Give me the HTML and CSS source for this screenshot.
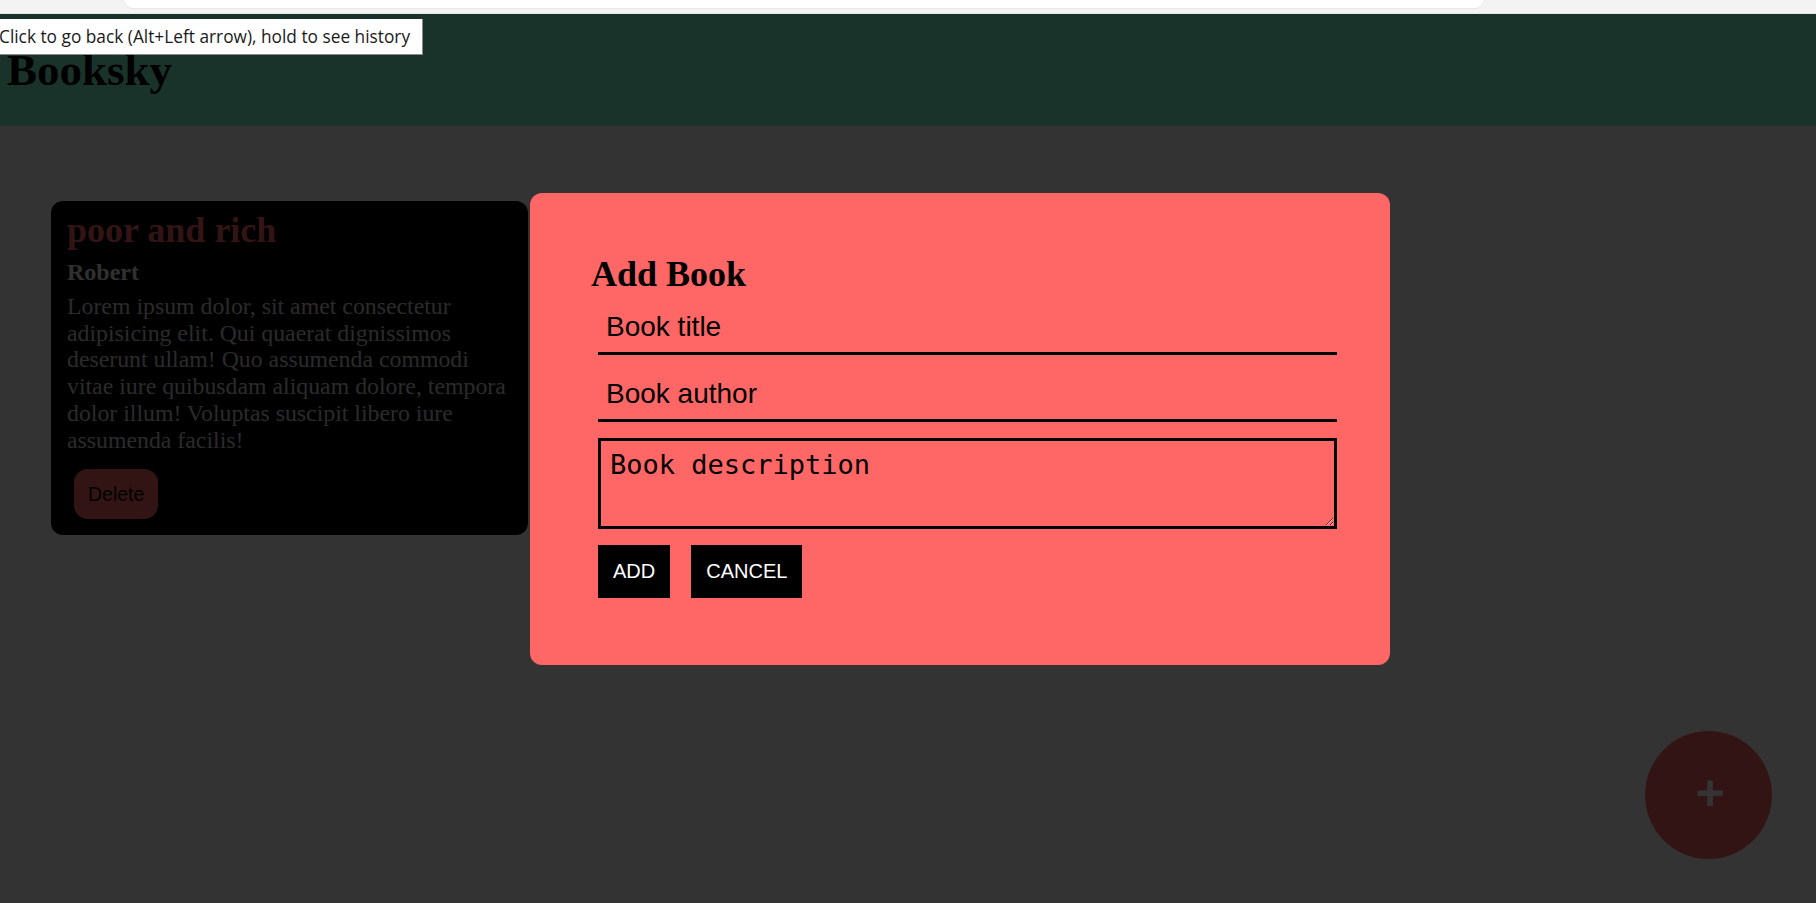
FILE: index.html
```html
<!DOCTYPE html>
<html lang="en">
<head>
<meta charset="utf-8">
<title>Booksky</title>
<link rel="stylesheet" href="styles.css">
</head>
<body>
<div class="browser-strip"><div class="omnibox"></div></div>

<header class="topbar">
  <h1 class="brand">Booksky</h1>
</header>

<main class="books">
  <article class="card">
    <h2 class="card-title">poor and rich</h2>
    <h3 class="card-author">Robert</h3>
    <p class="card-text">Lorem ipsum dolor, sit amet consectetur adipisicing elit. Qui quaerat dignissimos deserunt ullam! Quo assumenda commodi vitae iure quibusdam aliquam dolore, tempora dolor illum! Voluptas suscipit libero iure assumenda facilis!</p>
    <button class="delete-btn">Delete</button>
  </article>
</main>

<button class="fab" aria-label="Add book">+</button>

<div class="overlay"></div>

<section class="modal">
  <h2 class="modal-title">Add Book</h2>
  <form class="modal-form">
    <input class="field" type="text" placeholder="Book title">
    <input class="field" type="text" placeholder="Book author">
    <textarea class="field-area" placeholder="Book description"></textarea>
    <div class="actions">
      <button type="button" class="action-btn">ADD</button>
      <button type="button" class="action-btn">CANCEL</button>
    </div>
  </form>
</section>

<div class="tooltip">Click to go back (Alt+Left arrow), hold to see history</div>
</body>
</html>
```

FILE: styles.css
```css
* { box-sizing: border-box; }

html, body {
  margin: 0;
  padding: 0;
  background: #ffffff;
  font-family: "Liberation Serif", "Times New Roman", serif;
  height: 100%;
  overflow: hidden;
}

.browser-strip {
  height: 14px;
  background: #f3f3f3;
  border-bottom: 1px solid #e6e6e6;
  position: relative;
}

.omnibox {
  margin-left: 125px;
  width: 1358px;
  height: 8px;
  background: #ffffff;
  border-radius: 0 0 14px 14px;
  box-shadow: 0 1px 1px rgba(0,0,0,0.06);
}

.topbar {
  height: 112px;
  background: #7fffd4;
  padding: 30px 7px 0;
}

.brand {
  margin: 0;
  font-size: 45px;
  font-weight: bold;
  color: #000;
  line-height: normal;
}

.books {
  padding: 75px 0 0 51px;
}

.card {
  width: 477px;
  height: 334px;
  background: #000;
  border-radius: 12px;
  padding: 9px 16px 15px 16px;
}

.card-title {
  margin: 0;
  font-size: 36px;
  line-height: 41px;
  color: #ff6666;
  font-weight: bold;
}

.card-author {
  margin: 8px 0 0;
  font-size: 24px;
  line-height: 27px;
  color: #eeeeee;
  font-weight: bold;
}

.card-text {
  margin: 7px 0 0;
  font-size: 23.8px;
  line-height: 26.7px;
  color: #d3d3d3;
}

.delete-btn {
  margin: 16px 0 0 7px;
  height: 50px;
  padding: 0 14px;
  border: none;
  border-radius: 14px;
  background: #ff6666;
  color: #000;
  font-family: "Liberation Sans", Arial, sans-serif;
  font-size: 19.5px;
}

.fab {
  position: fixed;
  right: 44px;
  bottom: 44px;
  width: 127px;
  height: 128px;
  border-radius: 50%;
  border: none;
  background: #ff6666;
  color: #ffffff;
  font-family: "Liberation Sans", Arial, sans-serif;
  font-size: 50px;
  font-weight: bold;
  line-height: 1;
  padding: 0 0 4px 3px;
}

.overlay {
  position: fixed;
  top: 14px;
  left: 0;
  right: 0;
  bottom: 0;
  background: rgba(0, 0, 0, 0.8);
}

.modal {
  position: absolute;
  left: 530px;
  top: 193px;
  width: 860px;
  background: #ff6666;
  border-radius: 12px;
  padding: 61px 53px 67px 61px;
}

.modal-title {
  margin: 0 0 8px;
  font-size: 36px;
  line-height: 41px;
  font-weight: bold;
  color: #000;
}

.modal-form {
  margin: 0 0 0 7px;
  display: flex;
  flex-direction: column;
}

.field {
  height: 52px;
  width: 100%;
  border: none;
  border-bottom: 3px solid #000;
  background: transparent;
  padding: 0 8px 2px;
  font-family: "Liberation Sans", Arial, sans-serif;
  font-size: 28px;
  color: #000;
  outline: none;
}

.field + .field { margin-top: 15px; }

.field::placeholder,
.field-area::placeholder {
  color: #000;
  opacity: 1;
}

.field-area {
  margin-top: 16px;
  height: 91px;
  width: 100%;
  border: 3px solid #000;
  background: transparent;
  padding: 8px 9px;
  font-family: "DejaVu Sans Mono", "Liberation Mono", monospace;
  font-size: 27px;
  color: #000;
  outline: none;
}

.actions {
  margin-top: 16px;
  display: flex;
  gap: 21px;
}

.action-btn {
  height: 53px;
  padding: 0 15px;
  border: none;
  border-radius: 0;
  background: #000;
  color: #fff;
  font-family: "Liberation Sans", Arial, sans-serif;
  font-size: 20px;
}

.tooltip {
  position: absolute;
  left: -8px;
  top: 19px;
  height: 36px;
  padding: 0 12px 0 7px;
  background: #fff;
  border-right: 1px solid #8a8a8a;
  border-bottom: 1px solid #8a8a8a;
  font-family: "Open Sans", "Noto Sans", sans-serif;
  font-size: 17.3px;
  line-height: 35px;
  color: #1a1a1a;
  white-space: nowrap;
}
```
